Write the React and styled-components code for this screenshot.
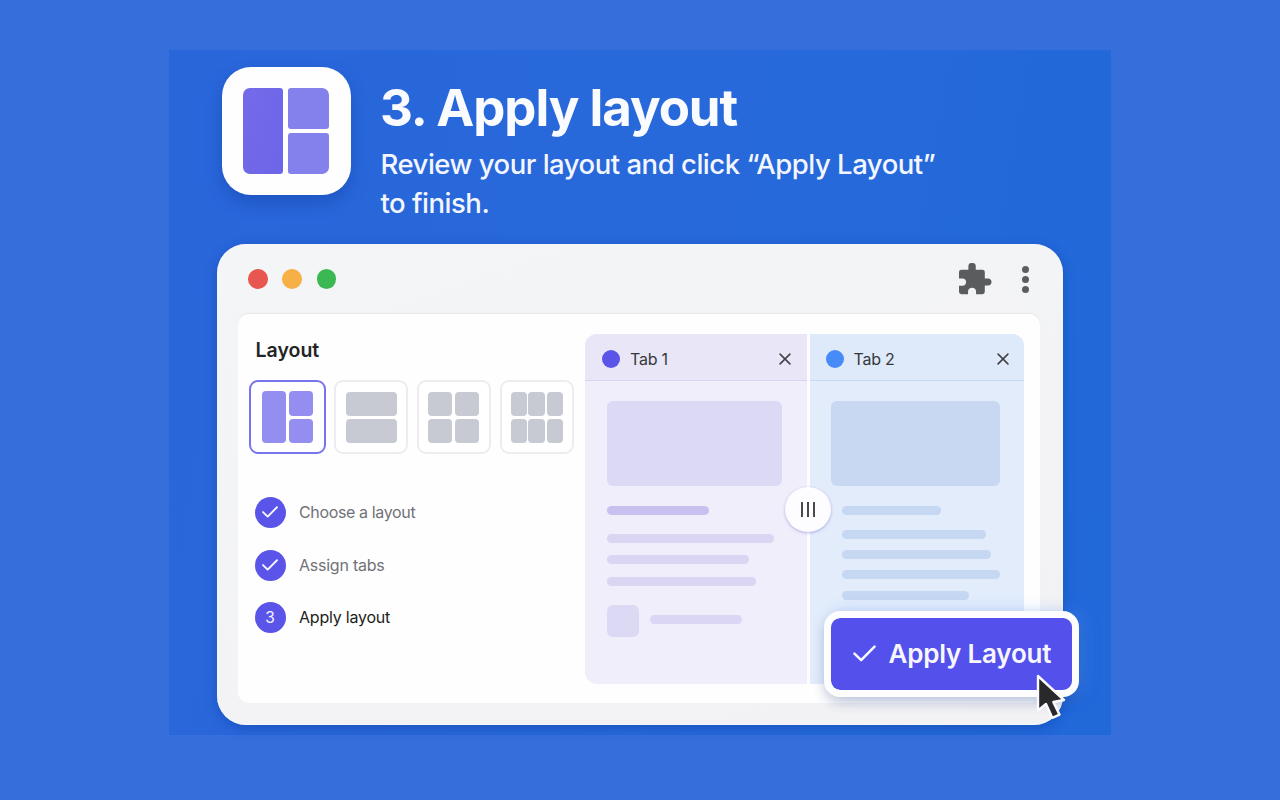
import React from "react";
import styled, { createGlobalStyle } from "styled-components";

const GlobalStyle = createGlobalStyle`
  * {
    box-sizing: border-box;
  }
  body {
    margin: 0;
    background: #366edc;
    font-family: Inter, "Liberation Sans", sans-serif;
  }
  h1, h2, p, ul {
    margin: 0;
    padding: 0;
  }
`;

const Page = styled.div`
  width: 1280px;
  height: 800px;
  padding: 50px 169px 0;
  overflow: hidden;
`;

const Stage = styled.main`
  width: 942px;
  height: 685.4px;
  padding: 17px 48px 0 48px;
  background: linear-gradient(100deg, #2966da 0%, #2769da 55%, #2168d9 100%);
`;

const Hero = styled.header`
  display: flex;
  height: 177.4px;
  padding-left: 5px;
  gap: 30px;
`;

const Logo = styled.div`
  width: 128.5px;
  height: 128px;
  padding: 21px 21px 21px 21px;
  display: grid;
  grid-template-columns: 40px 41px;
  grid-template-rows: 41px 41px;
  gap: 4px 5px;
  border-radius: 29px;
  background: #fefefe;
  box-shadow: 0 8px 16px rgba(18, 60, 160, 0.4);
`;

const LogoTile = styled.div`
  grid-row: ${(p) => (p.$tall ? "span 2" : "auto")};
  background: ${(p) => (p.$tall ? "linear-gradient(110deg, #746ae9, #6d65e8)" : "#8480ec")};
  border-radius: ${(p) => p.$radius};
`;

const Title = styled.h1`
  margin: 10px 0 0 -0.5px;
  font-size: 51px;
  line-height: 62px;
  font-weight: 700;
  letter-spacing: -1.05px;
  color: #fafbff;
  white-space: nowrap;
`;

const Subtitle = styled.p`
  margin-top: 6px;
  font-size: 27.5px;
  line-height: 39.3px;
  font-weight: 500;
  letter-spacing: -0.49px;
  color: #f3f6ff;
  white-space: nowrap;
`;

const Browser = styled.section`
  position: relative;
  width: 845.5px;
  height: 480.2px;
  padding: 0 23px 0 21px;
  border-radius: 29px;
  background: linear-gradient(160deg, #f4f5f6, #f2f2f4);
  box-shadow: inset 0 0 2px #fff, 0 3px 12px rgba(12, 55, 160, 0.42);
`;

const Chrome = styled.div`
  height: 69.6px;
  padding: 0 10.5px 0 10px;
  display: flex;
  align-items: center;
  justify-content: space-between;
`;

const Lights = styled.div`
  display: flex;
  gap: 14.7px;
`;

const Light = styled.span`
  width: 19.7px;
  height: 19.7px;
  border-radius: 50%;
  background: ${(p) => p.$color};
`;

const Tools = styled.div`
  display: flex;
  align-items: center;
  gap: 30.5px;
`;

const Dots = styled.div`
  display: flex;
  flex-direction: column;
  gap: 3.1px;

  span {
    width: 7px;
    height: 7px;
    border-radius: 50%;
    background: #5c5d5f;
  }
`;

const Content = styled.div`
  display: flex;
  height: 389px;
  padding: 20px 15.5px 19px 11px;
  justify-content: space-between;
  border-radius: 11px;
  background: #fefefe;
  box-shadow: 0 -1px 1px #e6e7ea;
`;

const Sidebar = styled.aside`
  width: 327px;
`;

const SideTitle = styled.h2`
  margin: 3px 0 0 6.5px;
  font-size: 19.5px;
  line-height: 26px;
  font-weight: 600;
  color: #232427;
`;

const Thumbs = styled.div`
  display: flex;
  margin-top: 17px;
  gap: 8.7px;
`;

const Thumb = styled.div`
  width: ${(p) => (p.$active ? "76.5px" : "74px")};
  height: 74.5px;
  display: grid;
  place-content: center;
  grid-template-columns: ${(p) => p.$cols};
  grid-template-rows: ${(p) => p.$rows || "24px 24px"};
  gap: 3px ${(p) => p.$gap || "3px"};
  border: ${(p) => (p.$active ? "2px solid #7974ee" : "2px solid #ededf0")};
  border-radius: 9px;
  background: #fff;
`;

const Cell = styled.span`
  grid-row: ${(p) => (p.$tall ? "span 2" : "auto")};
  border-radius: 4px;
  background: ${(p) => (p.$active ? "#938eef" : "#c7cad2")};
`;

const Steps = styled.ul`
  display: flex;
  flex-direction: column;
  margin: 42.5px 0 0 5.5px;
  gap: 21.6px;
  list-style: none;
`;

const Step = styled.li`
  display: flex;
  align-items: center;
  gap: 13.5px;
  font-size: 16px;
  line-height: 31px;
  letter-spacing: ${(p) => p.$track};
  color: ${(p) => (p.$current ? "#1d1d20" : "#717277")};
`;

const Bullet = styled.span`
  width: 31px;
  height: 31px;
  display: flex;
  align-items: center;
  justify-content: center;
  border-radius: 50%;
  background: #5b54e9;
  color: #f5f5ff;
  font-size: 15.5px;
`;

const Split = styled.div`
  position: relative;
  display: flex;
  width: 439px;
  height: 350px;
  border-radius: 12px;
  overflow: hidden;
  background: #fdfdff;
  gap: 3px;
`;

const Pane = styled.div`
  width: ${(p) => p.$width};
  background: ${(p) => p.$bg};
`;

const PaneHeader = styled.div`
  display: flex;
  align-items: center;
  height: 47px;
  padding: 4.5px ${(p) => p.$right} 0 ${(p) => p.$left};
  border-bottom: 1.5px solid ${(p) => p.$line};
  background: ${(p) => p.$bg};
  font-size: 16px;
  letter-spacing: -0.25px;
  color: #37383c;

  svg {
    margin-left: auto;
  }
`;

const TabDot = styled.span`
  width: 18px;
  height: 18px;
  margin-right: 10px;
  border-radius: 50%;
  background: ${(p) => p.$color};
`;

const PaneBody = styled.div`
  display: flex;
  flex-direction: column;
  align-items: flex-start;
  padding: 19.7px 0 0 ${(p) => p.$left};
`;

const Banner = styled.div`
  width: ${(p) => p.$width};
  height: 85.5px;
  border-radius: 6px;
  background: ${(p) => p.$color};
`;

const Line = styled.span`
  width: ${(p) => p.$width};
  height: 9px;
  margin: ${(p) => p.$top || "0"} 0 0 ${(p) => p.$left || "0"};
  border-radius: 5px;
  background: ${(p) => p.$color};
`;

const MediaRow = styled.div`
  display: flex;
  align-items: center;
  margin-top: 18.5px;
  gap: 11px;
`;

const MediaBox = styled.span`
  width: 32px;
  height: 32.5px;
  border-radius: 6px;
  background: #dcd9f4;
`;

const Handle = styled.div`
  position: absolute;
  left: 200px;
  top: 153px;
  width: 46px;
  height: 45px;
  display: flex;
  align-items: center;
  justify-content: center;
  gap: 4px;
  border-radius: 50%;
  background: #fdfdff;
  box-shadow: 0 1px 3px rgba(120, 105, 210, 0.5);

  span {
    width: 2px;
    height: 15px;
    background: #4a4a4d;
  }
`;

const ApplyButton = styled.button`
  position: absolute;
  left: 607px;
  top: 366.6px;
  width: 255px;
  height: 86.5px;
  display: flex;
  align-items: center;
  padding: 0 0 1px 21.5px;
  border: 7px solid #fdfdff;
  border-radius: 16px;
  background: #5450ec;
  background-clip: padding-box;
  box-shadow: 0 6px 12px rgba(40, 50, 90, 0.2), 6px 0 16px rgba(90, 150, 255, 0.28);
  color: #f6f6ff;
  font: 560 26px Inter, sans-serif;
  letter-spacing: -0.2px;
  white-space: nowrap;

  svg {
    margin-right: 13px;
  }
`;

const Cursor = styled.svg`
  position: absolute;
  left: 816px;
  top: 427px;
`;

const Check = ({ width, height, stroke }) => (
  <svg width={width} height={height} viewBox="0 0 22 16" fill="none">
    <path
      d="M1.4 8.1 L7.8 14.3 L20.6 1.5"
      stroke="#f8f8ff"
      strokeWidth={stroke}
      strokeLinecap="round"
      strokeLinejoin="round"
    />
  </svg>
);

const Close = () => (
  <svg width="12" height="12" viewBox="0 0 12 12">
    <path d="M1.1 1.1 L10.9 10.9 M10.9 1.1 L1.1 10.9" stroke="#434347" strokeWidth="1.6" strokeLinecap="round" />
  </svg>
);

const Puzzle = () => (
  <svg width="32.5" height="31.5" viewBox="477 39 97 94">
    <path
      fill="#5b5c5e"
      d="M484 59 H505 V49 Q505 39 514 39 H518 Q527 39 527 49 V59 H547 Q554 59 554 66 V85 H563 Q574 86 574 95.5 Q574 105 563 106 H554 V125 Q554 132 547 132 H528 V124 Q527 113 516 113 Q505 113 504 124 V132 H484 Q477 132 477 125 V107 H487 Q498 106 498 95.5 Q498 86 487 85 H477 V66 Q477 59 484 59 Z"
    />
  </svg>
);

const leftLines = [
  { width: "102px", top: "20px", color: "#c8c0ee" },
  { width: "166.5px", top: "19px", color: "#d9d5f3" },
  { width: "142px", top: "12.3px", color: "#d9d5f3" },
  { width: "149px", top: "12.7px", color: "#d9d5f3" },
];

const rightLines = [
  { width: "99.5px", top: "20px" },
  { width: "144.5px", top: "14.8px" },
  { width: "149.5px", top: "11px" },
  { width: "158.5px", top: "11.5px" },
  { width: "127.5px", top: "11.8px" },
];

const App = () => {
  return (
    <Page>
      <GlobalStyle />
      <Stage>
        <Hero>
          <Logo>
            <LogoTile $tall $radius="7px 3px 3px 7px" />
            <LogoTile $radius="3px 7px 3px 3px" />
            <LogoTile $radius="3px 3px 7px 3px" />
          </Logo>
          <div>
            <Title>3. Apply layout</Title>
            <Subtitle>
              Review your layout and click “Apply Layout”
              <br />
              to finish.
            </Subtitle>
          </div>
        </Hero>

        <Browser>
          <Chrome>
            <Lights>
              <Light $color="#e7564f" />
              <Light $color="#f7b045" />
              <Light $color="#3cb852" />
            </Lights>
            <Tools>
              <Puzzle />
              <Dots>
                <span />
                <span />
                <span />
              </Dots>
            </Tools>
          </Chrome>

          <Content>
            <Sidebar>
              <SideTitle>Layout</SideTitle>
              <Thumbs>
                <Thumb $active $cols="24px 24px" $rows="25px 24px" $gap="3.5px">
                  <Cell $active $tall />
                  <Cell $active />
                  <Cell $active />
                </Thumb>
                <Thumb $cols="51px">
                  <Cell />
                  <Cell />
                </Thumb>
                <Thumb $cols="24px 24px">
                  {[0, 1, 2, 3].map((n) => <Cell key={n} />)}
                </Thumb>
                <Thumb $cols="16px 16.5px 16px" $gap="1.8px">
                  {[0, 1, 2, 3, 4, 5].map((n) => <Cell key={n} />)}
                </Thumb>
              </Thumbs>
              <Steps>
                <Step $track="-0.36px">
                  <Bullet><Check width={16} height={12} stroke={2.6} /></Bullet>
                  Choose a layout
                </Step>
                <Step $track="-0.24px">
                  <Bullet><Check width={16} height={12} stroke={2.6} /></Bullet>
                  Assign tabs
                </Step>
                <Step $current $track="-0.22px">
                  <Bullet>3</Bullet>
                  Apply layout
                </Step>
              </Steps>
            </Sidebar>

            <Split>
              <Pane $width="221.5px" $bg="#f0eefb">
                <PaneHeader $bg="#e9e6f8" $line="#d9d4f3" $left="17px" $right="15.5px">
                  <TabDot $color="#5b54e9" />
                  Tab 1
                  <Close />
                </PaneHeader>
                <PaneBody $left="22px">
                  <Banner $width="175px" $color="#dcd9f4" />
                  {leftLines.map((l, i) => (
                    <Line key={i} $width={l.width} $top={l.top} $color={l.color} />
                  ))}
                  <MediaRow>
                    <MediaBox />
                    <Line $width="92px" $top="-2px" $color="#dad6f3" />
                  </MediaRow>
                </PaneBody>
              </Pane>
              <Pane $width="214.5px" $bg="#e2ecfb">
                <PaneHeader $bg="#deeafa" $line="#c8daf5" $left="16px" $right="15px">
                  <TabDot $color="#468bf7" />
                  Tab 2
                  <Close />
                </PaneHeader>
                <PaneBody $left="21.5px">
                  <Banner $width="169px" $color="#c8d8f2" />
                  {rightLines.map((l, i) => (
                    <Line key={i} $left="10.5px" $width={l.width} $top={l.top} $color="#c6d7f2" />
                  ))}
                </PaneBody>
              </Pane>
              <Handle>
                <span />
                <span />
                <span />
              </Handle>
            </Split>
          </Content>

          <ApplyButton>
            <Check width={23} height={17} stroke={2.4} />
            Apply Layout
          </ApplyButton>
          <Cursor width="34" height="52" viewBox="0 0 34 52">
            <path
              d="M5 5 L5 39.5 L13 33 L19.3 46.8 L26.5 43.6 L20.3 31 L31 29 Z"
              fill="#29292b"
              stroke="#fafaff"
              strokeWidth="2.4"
              strokeLinejoin="round"
            />
          </Cursor>
        </Browser>
      </Stage>
    </Page>
  );
};

export default App;
